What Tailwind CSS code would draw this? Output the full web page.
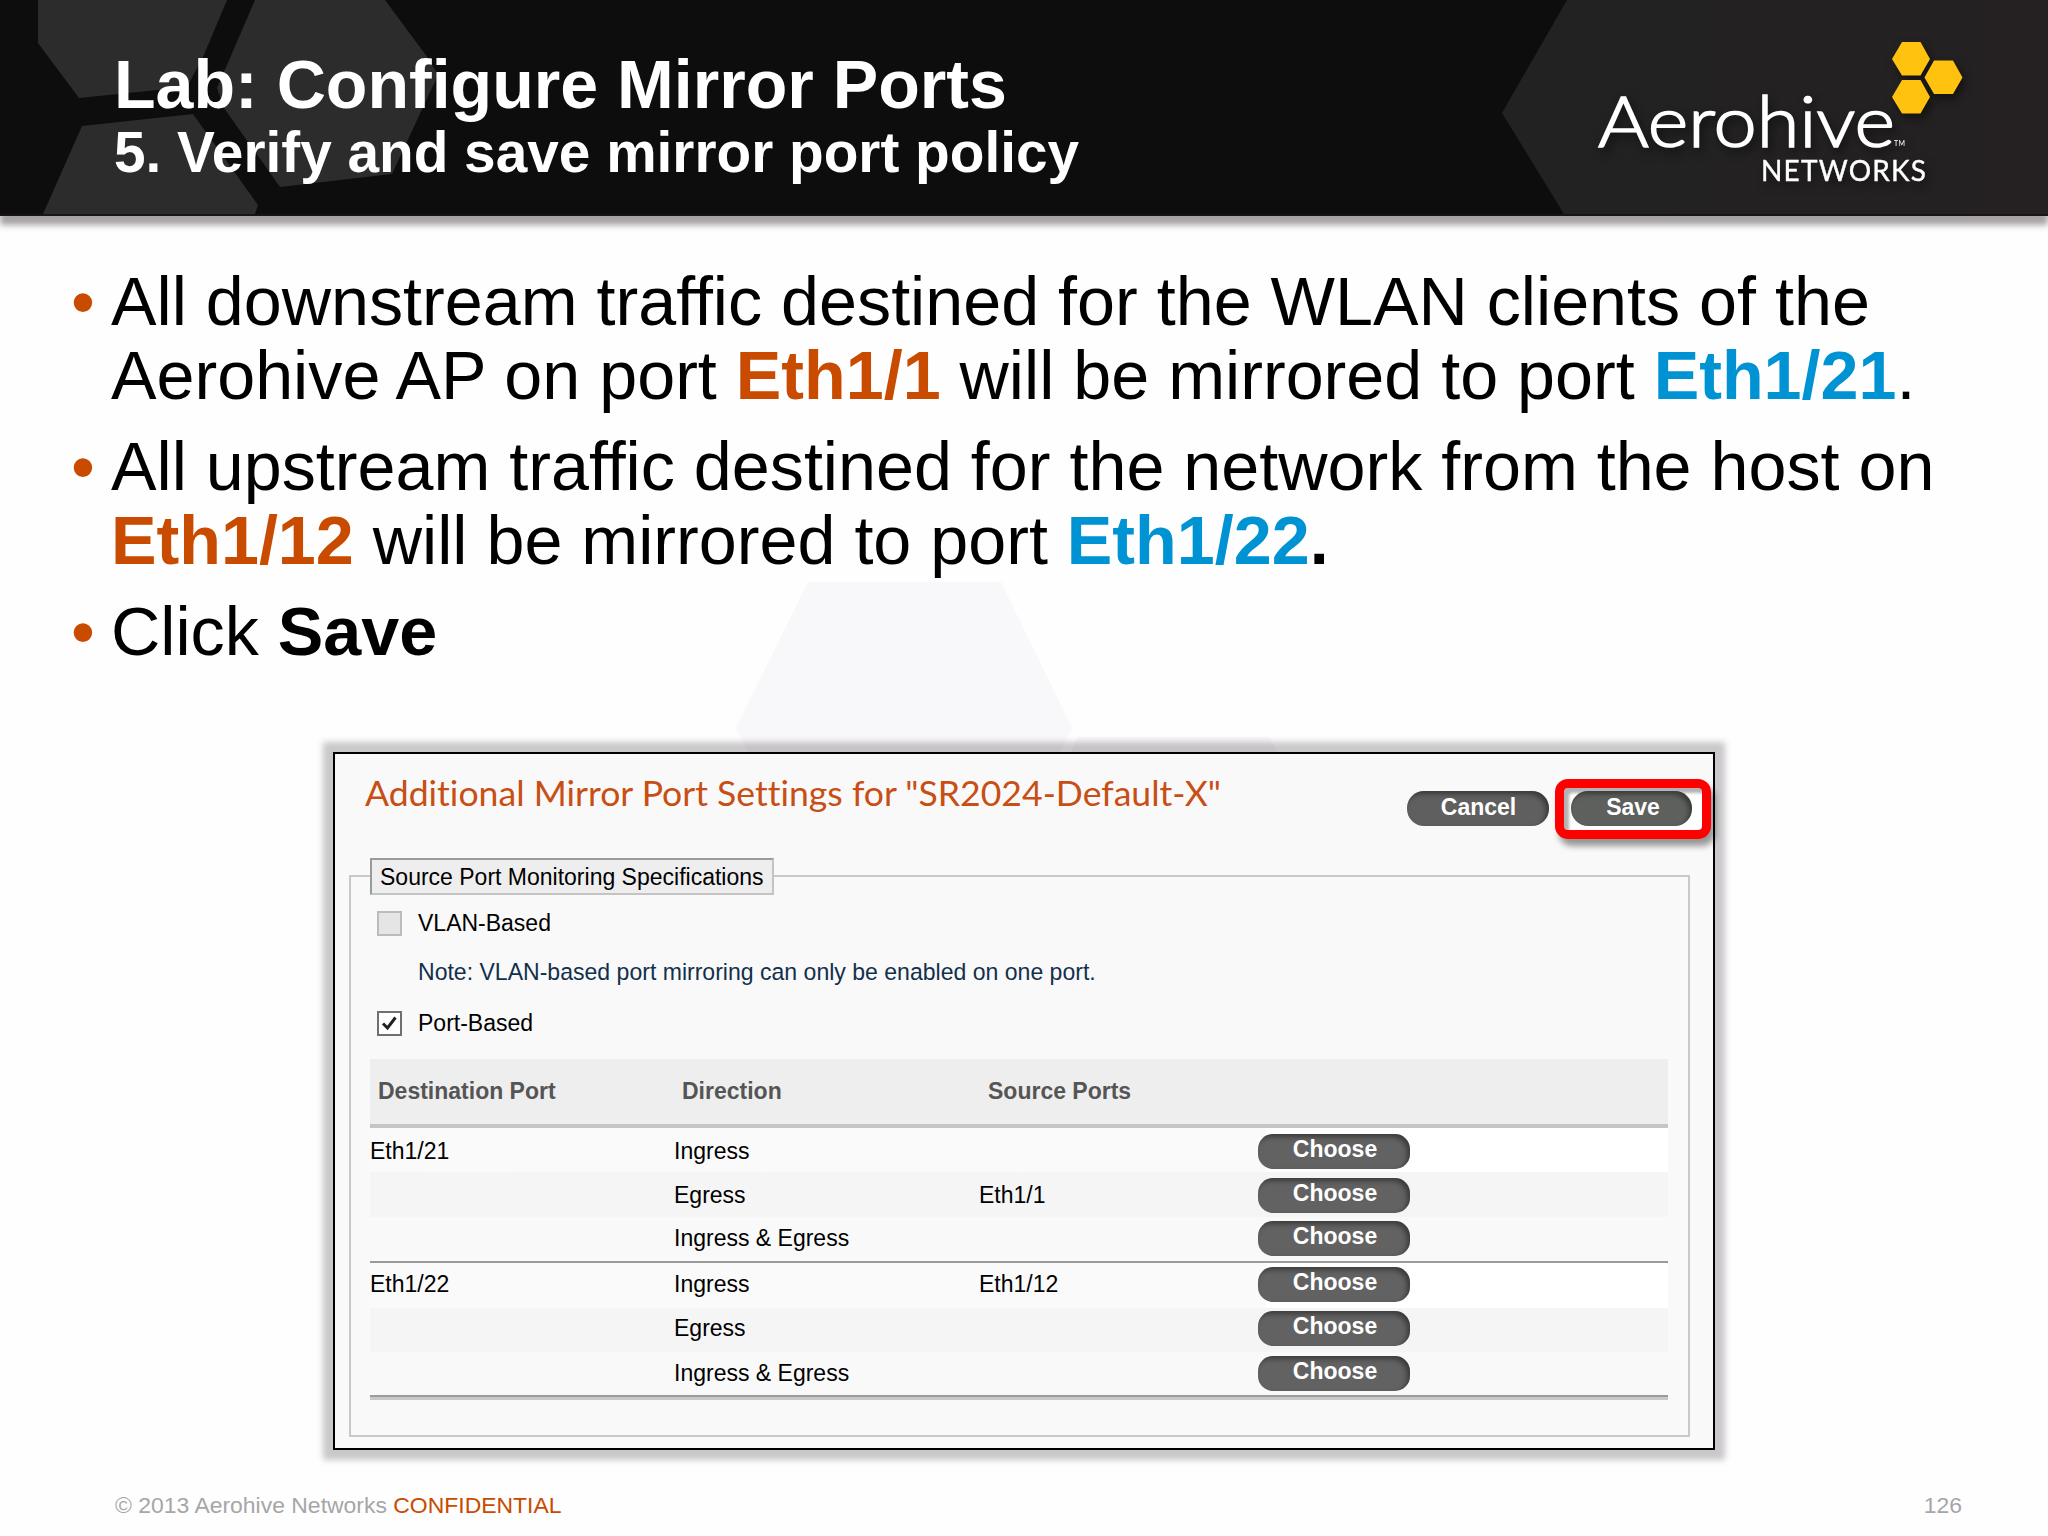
<!DOCTYPE html>
<html lang="en">
  <head>
    <meta charset="UTF-8" />
    <meta name="viewport" content="width=device-width, initial-scale=1.0" />
    <script src="https://cdn.jsdelivr.net/npm/@tailwindcss/browser@4"></script>
    <title>Lab: Configure Mirror Ports</title>
  </head>
  <body class="bg-[#fefefe] font-['Liberation_Sans',Arial,sans-serif] text-black overflow-hidden">
    <div class="relative w-[2048px] h-[1536px] flex flex-col overflow-hidden">
      <!-- Pale hexagons behind the content -->
      <svg class="absolute inset-0 w-full h-full" viewBox="0 0 2048 1536">
        <polygon points="808,582 1001,582 1072,728 1001,874 808,874 736,728" fill="#f8f7fa" />
        <polygon points="1078,737 1270,737 1340,880 1010,880" fill="#f8f7fa" />
      </svg>

      <!-- Header -->
      <header class="relative h-[216px] shrink-0 bg-[#0d0d0d] flex justify-between shadow-[0_9px_6px_rgba(60,50,58,0.45)]">
        <svg class="absolute inset-0 w-full h-full" viewBox="0 0 2048 216">
          <defs>
            <linearGradient id="rightHex" x1="0" x2="1">
              <stop offset="0" stop-color="#222222" />
              <stop offset="1" stop-color="#252122" />
            </linearGradient>
          </defs>
          <g fill="#2c2c2c">
            <polygon points="38,0 38,43 79,98 187,87 203,57 227,0" />
            <polygon points="255,0 217,88 224,108 280,187 392,174 438,75 428,58 385,0" />
            <polygon points="82,126 193,114 258,205 255,214 43,214" />
          </g>
          <polygon points="1567,0 1502,113 1564,214 2048,214 2048,0" fill="url(#rightHex)" />
          <rect y="214" width="2048" height="2" fill="#1a1418" />
        </svg>
        <div class="relative pl-[114px] pt-[46px] text-white font-bold whitespace-nowrap">
          <h1 class="text-[68.1px] leading-[76px]">Lab: Configure Mirror Ports</h1>
          <h2 class="text-[56.75px] leading-[62px]">5. Verify and save mirror port policy</h2>
        </div>
        <svg class="relative w-[448px] h-[214px] overflow-visible drop-shadow-[3px_5px_5px_rgba(0,0,0,0.5)]" viewBox="1600 0 448 214">
          <g fill="#ffc20e">
            <polygon points="1892,59 1902,42 1920.500,42 1930,59 1920.500,75.500 1902,75.500" />
            <polygon points="1892,97 1902,80 1920.500,80 1930,97 1920.500,113.500 1902,113.500" />
            <polygon points="1924.500,77.500 1934,60.500 1953,60.500 1962.500,77.500 1953,94 1934,94" />
          </g>
          <g fill="#fff" font-family="Lato, sans-serif">
            <text x="1598" y="146.500" font-size="70" font-weight="300" stroke="#fff" stroke-width="1.600" textLength="297" lengthAdjust="spacingAndGlyphs">Aerohive</text>
            <text x="1761" y="181" font-size="28" stroke="#fff" stroke-width="0.400" textLength="165" lengthAdjust="spacing">NETWORKS</text>
            <text x="1894" y="146" font-size="7" textLength="11">TM</text>
          </g>
        </svg>
      </header>

      <!-- Slide text -->
      <main class="relative flex flex-col grow">
        <ul class="pt-[49px] h-[536px] shrink-0 flex flex-col gap-[17.5px] text-[68.25px] leading-[73.7px] whitespace-nowrap">
          <li class="flex">
            <span class="w-[111px] pl-[71px] text-[#c84b00]">•</span>
            <p>All downstream traffic destined for the WLAN clients of the<br />Aerohive AP on port <b class="text-[#c84b00]">Eth1/1</b> will be mirrored to port <b class="text-[#0093d3]">Eth1/21</b>.</p>
          </li>
          <li class="flex">
            <span class="w-[111px] pl-[71px] text-[#c84b00]">•</span>
            <p>All upstream traffic destined for the network from the host on<br /><b class="text-[#c84b00]">Eth1/12</b> will be mirrored to port <b class="text-[#0093d3]">Eth1/22</b><b>.</b></p>
          </li>
          <li class="flex">
            <span class="w-[111px] pl-[71px] text-[#c84b00]">•</span>
            <p>Click <b>Save</b></p>
          </li>
        </ul>

        <!-- Mirror port settings panel -->
        <section class="ml-[333px] w-[1382px] h-[698px] shrink-0 border-2 border-black bg-[#faf9f9] shadow-[0_0_6px_10px_rgba(70,62,70,0.28)] text-[23px] leading-[26px] whitespace-nowrap">
          <div class="h-[104px] flex justify-between">
            <h3 class="pl-[30px] pt-[14px]">
              <svg class="w-[870px] h-[60px] overflow-visible" viewBox="0 0 870 60">
                <text x="0" y="38" fill="#c84f14" font-family="Lato, sans-serif" font-size="34.500" textLength="856" lengthAdjust="spacingAndGlyphs" class="[font-variant-ligatures:none]">Additional Mirror Port Settings for "SR2024-Default-X"</text>
              </svg>
            </h3>
            <div class="flex items-start pt-[25px] pr-[2px] font-bold text-white">
              <button class="mt-[12px] w-[142px] h-[35px] rounded-[17px] bg-[#5f5f5f] leading-[33px] shadow-[inset_-3px_3px_5px_rgba(0,0,0,0.4)] pb-[2px] pl-[1px]">Cancel</button>
              <div class="ml-[6px] w-[156px] h-[60px] rounded-[13px] border-[9px] border-[#fe0000] bg-white shadow-[4px_7px_6px_rgba(0,0,0,0.4),inset_5px_5px_3px_rgba(0,0,0,0.3)] pl-[7px] pt-[3px]">
                <button class="w-[121px] h-[35px] rounded-[17px] bg-[#5d605d] leading-[33px] shadow-[inset_-3px_3px_5px_rgba(0,0,0,0.4)] pb-[2px] pl-[3px]">Save</button>
              </div>
            </div>
          </div>

          <div class="ml-[14px] mt-[17px] w-[1341px] h-[562px] border-2 border-[#c9c9c9] px-[19px]">
            <div class="-mt-[19px] w-[404px] h-[37px] border-2 border-t-[#9a9a9a] border-l-[#9a9a9a] border-r-[#c4c4c4] border-b-[#c4c4c4] bg-[#efeeef] pl-[8px] pt-[4px]">Source Port Monitoring Specifications</div>

            <div class="mt-[15px] pl-[7px] h-[26px] flex items-center gap-[16px]">
              <span class="w-[25px] h-[25px] border-2 border-[#bcbcbc] bg-[#e6e5e6]"></span>
              <span>VLAN-Based</span>
            </div>
            <p class="mt-[23px] pl-[48px] text-[23.05px] text-[#12304c]">Note: VLAN-based port mirroring can only be enabled on one port.</p>
            <div class="mt-[25px] pl-[7px] h-[26px] flex items-center gap-[16px]">
              <span class="w-[25px] h-[25px] border-2 border-[#707070] bg-white flex items-center justify-center">
                <svg class="w-[19px] h-[19px]" viewBox="0 0 19 19" fill="none" stroke="#222" stroke-width="3">
                  <path d="M3 9.500 L7.500 14 L15.500 3.500" />
                </svg>
              </span>
              <span>Port-Based</span>
            </div>

            <div class="mt-[23px] w-[1298px]">
              <div class="h-[69px] grid grid-cols-[304px_306px_1fr] bg-[#efeeee] border-b-4 border-[#c6c5c6] pt-[19px] pl-[8px] font-bold text-[#555]">
                <span>Destination Port</span>
                <span>Direction</span>
                <span>Source Ports</span>
              </div>
              <div class="h-[44px] pt-[6px] grid grid-cols-[304px_305px_279px_1fr] items-start bg-linear-to-r from-[#fbfafb] from-69% to-white to-69%">
                <span class="mt-[4px]">Eth1/21</span>
                <span class="mt-[4px]">Ingress</span>
                <span></span>
                <button class="w-[152px] h-[35px] rounded-[15px] bg-[#626262] font-bold text-white leading-[30px] pb-[5px] pl-[2px] shadow-[inset_-3px_3px_5px_rgba(0,0,0,0.4)]">Choose</button>
              </div>
              <div class="h-[45px] pt-[6px] grid grid-cols-[304px_305px_279px_1fr] items-start bg-[#f6f5f6]">
                <span></span>
                <span class="mt-[4px]">Egress</span>
                <span class="mt-[4px]">Eth1/1</span>
                <button class="w-[152px] h-[35px] rounded-[15px] bg-[#626262] font-bold text-white leading-[30px] pb-[5px] pl-[2px] shadow-[inset_-3px_3px_5px_rgba(0,0,0,0.4)]">Choose</button>
              </div>
              <div class="h-[46px] pt-[4px] grid grid-cols-[304px_305px_279px_1fr] items-start border-b-2 border-[#9c9b9c]">
                <span></span>
                <span class="mt-[4px]">Ingress &amp; Egress</span>
                <span></span>
                <button class="w-[152px] h-[35px] rounded-[15px] bg-[#626262] font-bold text-white leading-[30px] pb-[5px] pl-[2px] shadow-[inset_-3px_3px_5px_rgba(0,0,0,0.4)]">Choose</button>
              </div>
              <div class="h-[45px] pt-[4px] grid grid-cols-[304px_305px_279px_1fr] items-start bg-linear-to-r from-[#fbfafb] from-69% to-white to-69%">
                <span class="mt-[4px]">Eth1/22</span>
                <span class="mt-[4px]">Ingress</span>
                <span class="mt-[4px]">Eth1/12</span>
                <button class="w-[152px] h-[35px] rounded-[15px] bg-[#626262] font-bold text-white leading-[30px] pb-[5px] pl-[2px] shadow-[inset_-3px_3px_5px_rgba(0,0,0,0.4)]">Choose</button>
              </div>
              <div class="h-[44px] pt-[3px] grid grid-cols-[304px_305px_279px_1fr] items-start bg-[#f6f5f6]">
                <span></span>
                <span class="mt-[4px]">Egress</span>
                <span></span>
                <button class="w-[152px] h-[35px] rounded-[15px] bg-[#626262] font-bold text-white leading-[30px] pb-[5px] pl-[2px] shadow-[inset_-3px_3px_5px_rgba(0,0,0,0.4)]">Choose</button>
              </div>
              <div class="h-[45px] pt-[4px] grid grid-cols-[304px_305px_279px_1fr] items-start border-b-2 border-[#9c9b9c]">
                <span></span>
                <span class="mt-[4px]">Ingress &amp; Egress</span>
                <span></span>
                <button class="w-[152px] h-[35px] rounded-[15px] bg-[#626262] font-bold text-white leading-[30px] pb-[5px] pl-[2px] shadow-[inset_-3px_3px_5px_rgba(0,0,0,0.4)]">Choose</button>
              </div>
              <div class="h-[3px] bg-[#c9c8c9]"></div>
            </div>
          </div>
        </section>

        <!-- Footer -->
        <footer class="mt-[42px] pl-[115px] pr-[86px] flex justify-between text-[22.95px] leading-[26px] text-[#a6a6a8]">
          <p>© 2013 Aerohive Networks <span class="text-[#c84b00]">CONFIDENTIAL</span></p>
          <p>126</p>
        </footer>
      </main>
    </div>
  </body>
</html>
